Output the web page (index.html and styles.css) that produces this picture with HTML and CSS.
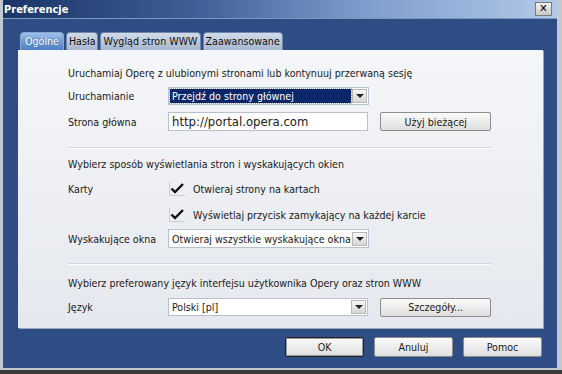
FILE: index.html
```html
<!DOCTYPE html>
<html lang="pl">
<head>
    <meta charset="UTF-8">
    <title>Preferencje</title>
    <link rel="stylesheet" href="styles.css">
</head>
<body>
    <div class="window">
        <div class="titlebar">
            <span class="title">Preferencje</span>
            <span class="close">&#x2715;</span>
        </div>

        <div class="client">
            <div class="tabs">
                <div class="tab active">Ogólne</div>
                <div class="tab">Hasła</div>
                <div class="tab">Wygląd stron WWW</div>
                <div class="tab">Zaawansowane</div>
            </div>

            <div class="panel">
                <div class="heading">Uruchamiaj Operę z ulubionymi stronami lub kontynuuj przerwaną sesję</div>
                <div class="row r1">
                    <span class="label">Uruchamianie</span>
                    <div class="select">
                        <span class="value selected">Przejdź do strony głównej</span>
                        <span class="arrow"></span>
                    </div>
                </div>
                <div class="row r2">
                    <span class="label">Strona główna</span>
                    <div class="input">http://portal.opera.com</div>
                    <button class="btn side">Użyj bieżącej</button>
                </div>

                <div class="sep"></div>

                <div class="heading h2">Wybierz sposób wyświetlania stron i wyskakujących okien</div>
                <div class="row r3">
                    <span class="label">Karty</span>
                    <span class="check"><svg width="15" height="13" viewBox="0 0 15 13"><path d="M1.5 6.5 L5 10 L13 2" fill="none" stroke="#111" stroke-width="2.4"/></svg></span>
                    <span>Otwieraj strony na kartach</span>
                </div>
                <div class="row r4">
                    <span class="label"></span>
                    <span class="check"><svg width="15" height="13" viewBox="0 0 15 13"><path d="M1.5 6.5 L5 10 L13 2" fill="none" stroke="#111" stroke-width="2.4"/></svg></span>
                    <span>Wyświetlaj przycisk zamykający na każdej karcie</span>
                </div>
                <div class="row r5">
                    <span class="label">Wyskakujące okna</span>
                    <div class="select">
                        <span class="value">Otwieraj wszystkie wyskakujące okna</span>
                        <span class="arrow"></span>
                    </div>
                </div>

                <div class="sep s2"></div>

                <div class="heading h3">Wybierz preferowany język interfejsu użytkownika Opery oraz stron WWW</div>
                <div class="row r6">
                    <span class="label">Język</span>
                    <div class="select">
                        <span class="value">Polski [pl]</span>
                        <span class="arrow"></span>
                    </div>
                    <button class="btn side">Szczegóły...</button>
                </div>
            </div>

            <div class="actions">
                <button class="btn default">OK</button>
                <button class="btn">Anuluj</button>
                <button class="btn">Pomoc</button>
            </div>
        </div>
    </div>
</body>
</html>
```

FILE: styles.css
```css
body {
    margin: 0;
    width: 562px;
    height: 374px;
    overflow: hidden;
    background: #3a3a3a;
    font-family: "DejaVu Sans Condensed", "DejaVu Sans", Tahoma, sans-serif;
    font-size: 10.6px;
    color: #1a1a1a;
}
.window {
    box-sizing: border-box;
    height: 370px;
    display: flex;
    flex-direction: column;
    background: #2d4d84;
    border-left: 3px solid #c4c9d1;
    border-right: 5px solid #c4c9d1;
    border-bottom: 2px solid #c4c9d1;
}
.titlebar {
    height: 18px;
    display: flex;
    align-items: center;
    justify-content: space-between;
    padding: 0 5px 0 1px;
    background: linear-gradient(to right, #1a3466, #3f5f96 35%, #7e9dcc 65%, #b2c9e8);
    border-bottom: 1px solid #7d97c0;
}
.title {
    color: #fff;
    font-weight: bold;
    font-size: 11px;
}
.close {
    width: 15px;
    height: 12px;
    line-height: 12px;
    text-align: center;
    font-size: 11px;
    font-weight: bold;
    color: #000;
    background: linear-gradient(#f2f2f2, #c8c8c8);
    border: 1px solid #7a7a7a;
}
.client {
    flex: 1;
    padding: 13px 14px 0 15px;
}
.tabs {
    display: flex;
    gap: 2px;
    height: 18px;
    padding-left: 2px;
}
.tab {
    padding: 0 2px;
    line-height: 17px;
    border: 1px solid #6f86ad;
    border-bottom: none;
    border-radius: 4px 4px 0 0;
    background: linear-gradient(#d2dbe8, #a7b7cf);
    color: #111;
}
.tab.active {
    padding: 0 4px;
    color: #fff;
    text-shadow: 0 0 2px #2d5fa8;
    background: linear-gradient(#9cc0ec, #4c7fc2);
    border-color: #87a6d0;
}
.panel {
    width: 525px;
    box-sizing: border-box;
    padding: 0 52px 12px 50px;
    background: linear-gradient(#f5f6f9, #e5e8ee);
    box-shadow: 1px 1px 0 #9aa7bb;
}
.heading {
    height: 16px;
    line-height: 16px;
    padding-top: 15px;
}
.heading.h2 { padding-top: 7px; }
.heading.h3 { padding-top: 10px; }
.row {
    display: flex;
    align-items: center;
    height: 18px;
}
.r1 { margin-top: 6px; }
.r2 { margin-top: 7px; height: 19px; }
.r3 { margin-top: 8px; }
.r4 { margin-top: 8px; }
.r5 { margin-top: 5px; height: 19px; }
.r6 { margin-top: 7px; }
.label {
    width: 100px;
    flex: none;
}
.select,
.input {
    box-sizing: border-box;
    width: 201px;
    height: 100%;
    display: flex;
    align-items: center;
    background: #fff;
    border: 1px solid #b9c1cc;
}
.select .value {
    flex: 1;
    margin: 1px;
    padding: 0 1px 0 2px;
    line-height: 14px;
    white-space: nowrap;
    overflow: hidden;
}
.select .value.selected {
    background: #0c2769;
    color: #fff;
    outline: 1px dotted #9aa8c8;
}
.arrow {
    position: relative;
    flex: none;
    width: 15px;
    height: 14px;
    margin-right: 1px;
    background: linear-gradient(#f6f6f6, #d6d6d6);
    border: 1px solid #b8b8b8;
    box-sizing: border-box;
}
.arrow::after {
    content: "";
    position: absolute;
    left: 3px;
    top: 4px;
    border-left: 4px solid transparent;
    border-right: 4px solid transparent;
    border-top: 4px solid #222;
}
.input {
    padding-left: 3px;
    font-size: 13px;
}
.btn {
    box-sizing: border-box;
    height: 20px;
    padding: 0;
    font: inherit;
    color: #1a1a1a;
    background: linear-gradient(#fbfbfb, #dedede);
    border: 1px solid #8c8c8c;
    border-radius: 2px;
}
.btn.side {
    width: 111px;
    height: 19px;
    margin-left: 12px;
}
.check {
    width: 15px;
    height: 13px;
    margin: 0 8px 0 1px;
    border: 1px solid #c9ced6;
    border-width: 0 0 1px 1px;
}
.sep {
    height: 1px;
    margin-top: 16px;
    background: #d3d8e0;
    border-bottom: 1px solid #fbfcfd;
}
.sep.s2 { margin-top: 15px; }
.actions {
    display: flex;
    justify-content: flex-end;
    gap: 10px;
    margin-top: 9px;
    padding-right: 1px;
}
.actions .btn {
    width: 79px;
}
.actions .btn.default {
    border: 1px solid #222;
    box-shadow: inset 0 0 0 1px #9a9a9a;
}
```
